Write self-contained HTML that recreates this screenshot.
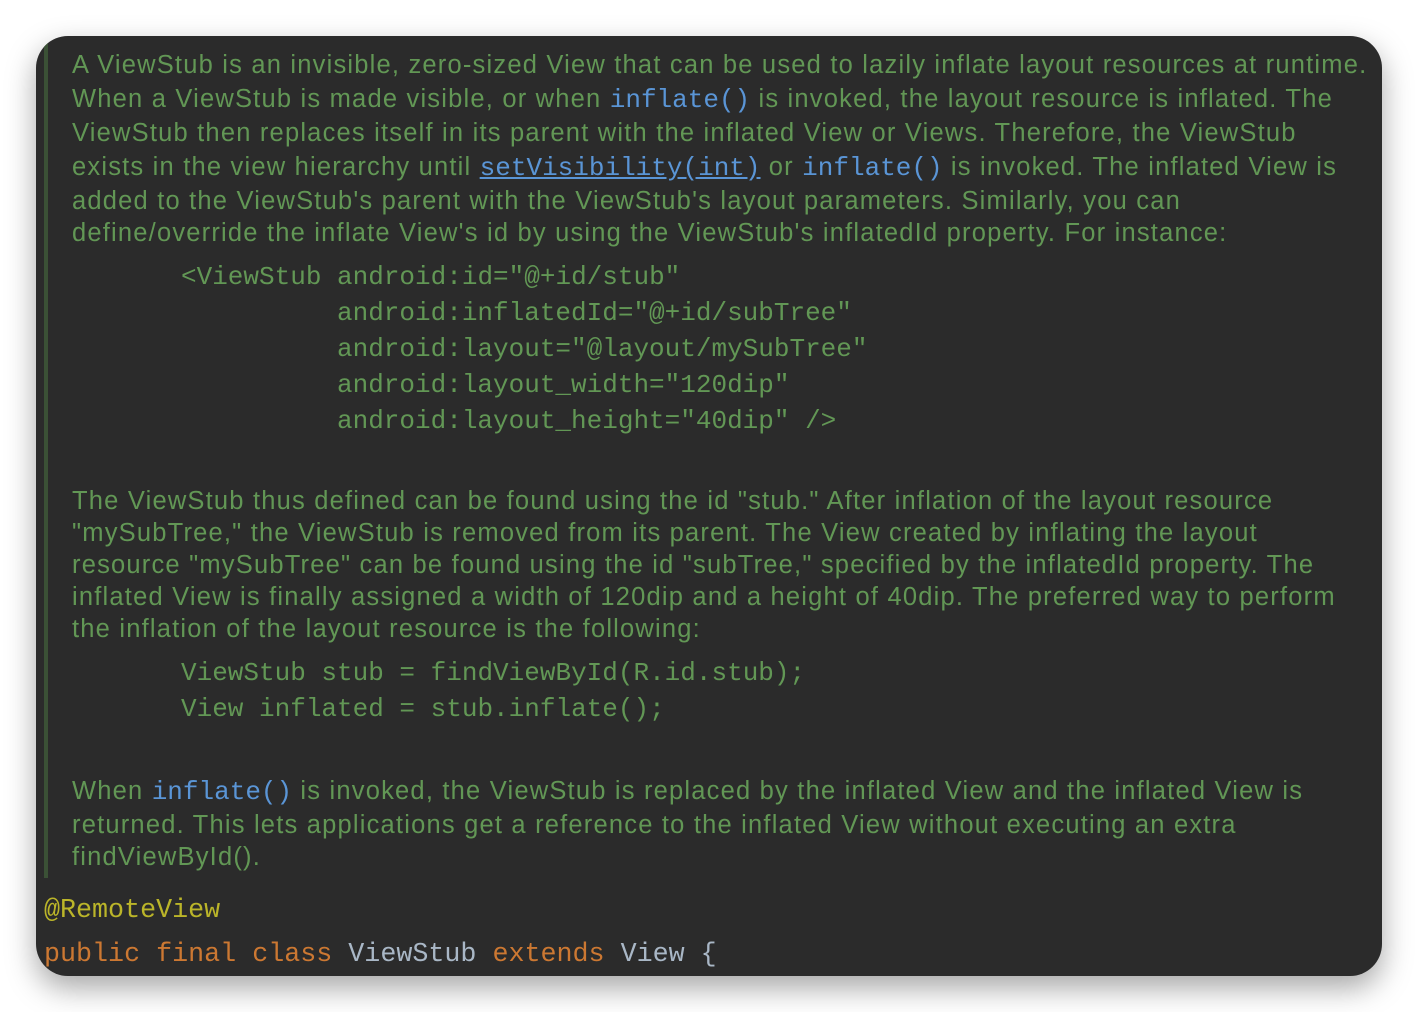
<!DOCTYPE html>
<html><head><style>
body{margin:0;width:1418px;height:1012px;background:#fff;overflow:hidden;position:relative}
.card{position:absolute;left:36px;top:36px;width:1346px;height:940px;background:#2b2b2b;border-radius:32px;box-shadow:0 12px 30px rgba(0,0,0,.35);overflow:hidden}
.bar{position:absolute;left:8px;top:0;width:4px;height:842px;background:#3b5136}
.l{position:absolute;white-space:nowrap;font-family:"Liberation Sans",sans-serif;font-size:25.5px;letter-spacing:1.2px;color:#629755;line-height:34px}
.m{position:absolute;white-space:nowrap;font-family:"Liberation Mono",monospace;font-size:26px;color:#629755;line-height:34px}
.a{font-family:"Liberation Mono",monospace;font-size:26px;letter-spacing:0;color:#5a95d6}
.u{text-decoration:underline}
.k{color:#cc7832}.n{color:#a9b7c6}.an{color:#bbb529}
</style></head><body>
<div class="card">
<div class="bar"></div>
<div class="l" style="left:36px;top:12px">A ViewStub is an invisible, zero-sized View that can be used to lazily inflate layout resources at runtime.</div>
<div class="l" style="left:36px;top:46px">When a ViewStub is made visible, or when <span class="a">inflate()</span> is invoked, the layout resource is inflated. The</div>
<div class="l" style="left:36px;top:80px">ViewStub then replaces itself in its parent with the inflated View or Views. Therefore, the ViewStub</div>
<div class="l" style="left:36px;top:114px">exists in the view hierarchy until <span class="a u">setVisibility(int)</span> or <span class="a">inflate()</span> is invoked. The inflated View is</div>
<div class="l" style="left:36px;top:148px">added to the ViewStub's parent with the ViewStub's layout parameters. Similarly, you can</div>
<div class="l" style="left:36px;top:180px">define/override the inflate View's id by using the ViewStub's inflatedId property. For instance:</div>
<div class="m" style="left:145px;top:224px">&lt;ViewStub android:id="@+id/stub"</div>
<div class="m" style="left:301px;top:260px">android:inflatedId="@+id/subTree"</div>
<div class="m" style="left:301px;top:296px">android:layout="@layout/mySubTree"</div>
<div class="m" style="left:301px;top:332px">android:layout_width="120dip"</div>
<div class="m" style="left:301px;top:368px">android:layout_height="40dip" /&gt;</div>
<div class="l" style="left:36px;top:448px">The ViewStub thus defined can be found using the id "stub." After inflation of the layout resource</div>
<div class="l" style="left:36px;top:480px">"mySubTree," the ViewStub is removed from its parent. The View created by inflating the layout</div>
<div class="l" style="left:36px;top:512px">resource "mySubTree" can be found using the id "subTree," specified by the inflatedId property. The</div>
<div class="l" style="left:36px;top:544px">inflated View is finally assigned a width of 120dip and a height of 40dip. The preferred way to perform</div>
<div class="l" style="left:36px;top:576px">the inflation of the layout resource is the following:</div>
<div class="m" style="left:145px;top:620px">ViewStub stub = findViewById(R.id.stub);</div>
<div class="m" style="left:145px;top:656px">View inflated = stub.inflate();</div>
<div class="l" style="left:36px;top:738px">When <span class="a">inflate()</span> is invoked, the ViewStub is replaced by the inflated View and the inflated View is</div>
<div class="l" style="left:36px;top:772px">returned. This lets applications get a reference to the inflated View without executing an extra</div>
<div class="l" style="left:36px;top:804px">findViewById().</div>
<div class="m an" style="left:8px;top:858px;font-size:26.7px">@RemoteView</div>
<div class="m" style="left:8px;top:902px;font-size:26.7px"><span class="k">public final class </span><span class="n">ViewStub </span><span class="k">extends </span><span class="n">View {</span></div>
</div>
</body></html>
